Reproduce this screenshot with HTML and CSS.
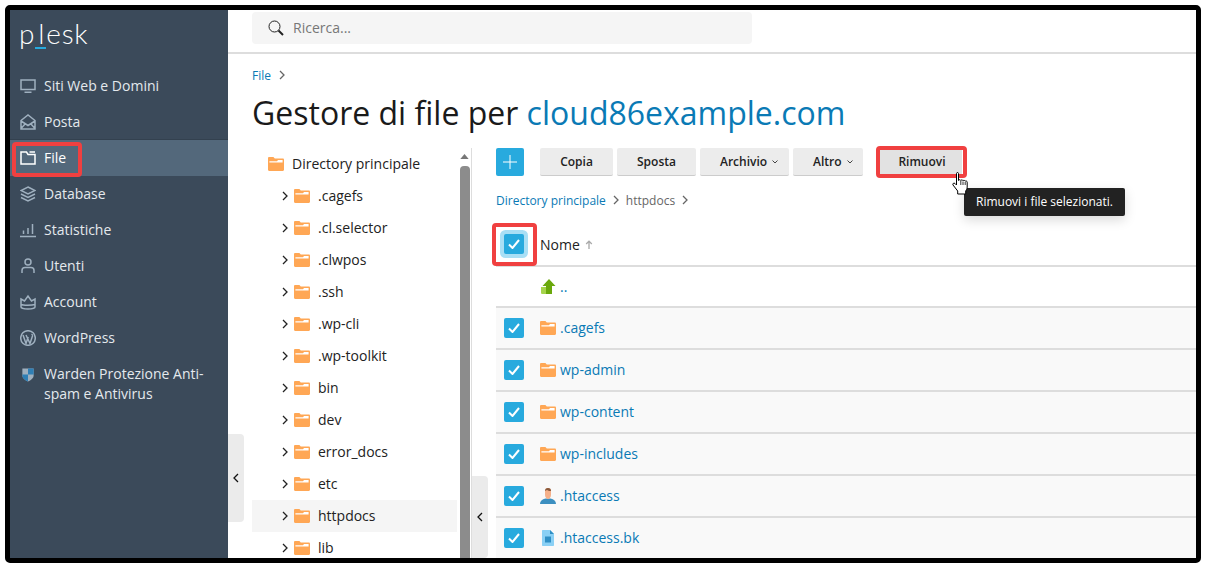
FILE: index.html
```html
<!DOCTYPE html>
<html lang="it">
<head>
    <meta charset="UTF-8">
    <title>Gestore di file</title>
    <link rel="stylesheet" href="styles.css">
</head>
<body>
    <svg class="defs" width="0" height="0">
        <symbol id="folder" viewBox="0 0 16 14">
            <path fill="#ffa755" d="M0 1.2C0 .5.5 0 1.2 0h4.2l1.4 1.6h8C15.500 1.600 16 2.100 16 2.800v10c0 .7-.5 1.200-1.200 1.200H1.200C.5 14 0 13.500 0 12.800z"/>
            <path fill="#fff" d="M1.400 4.200 9 4.200 10 3h4.600v2.600H1.400z"/>
        </symbol>
        <symbol id="chev" viewBox="0 0 8 10">
            <path fill="none" stroke="currentColor" stroke-width="1.300" d="M2 1l4 4-4 4"/>
        </symbol>
    </svg>
    <div class="frame">
        <aside class="sidebar">
            <div class="logo">p<span class="logo-l">l</span>esk</div>
            <nav class="nav">
                <a class="nav-item">
                    <svg class="nav-icon" viewBox="0 0 16 16"><path d="M1 2h14v9.500H1zM4.500 14.300h7"/></svg>
                    <span>Siti Web e Domini</span>
                </a>
                <a class="nav-item">
                    <svg class="nav-icon" viewBox="0 0 16 16"><path d="M1 6.500 8 1l7 5.500V15H1zM1 7l7 4.500L15 7M1 14.500l4.500-5M15 14.500l-4.500-5"/></svg>
                    <span>Posta</span>
                </a>
                <a class="nav-item active">
                    <svg class="nav-icon" viewBox="0 0 16 16"><path d="M1 2v12h14V4.500H8L6.500 2zM9.500 2H15"/></svg>
                    <span>File</span>
                </a>
                <a class="nav-item">
                    <svg class="nav-icon" viewBox="0 0 16 16"><path d="M8 1l7 3.500L8 8 1 4.500zM1 8l7 3.500L15 8M1 11.500 8 15l7-3.500"/></svg>
                    <span>Database</span>
                </a>
                <a class="nav-item">
                    <svg class="nav-icon" viewBox="0 0 16 16"><path d="M0 14.500h16M3.500 12V8.500M8 12V6M12.500 12V2"/></svg>
                    <span>Statistiche</span>
                </a>
                <a class="nav-item">
                    <svg class="nav-icon" viewBox="0 0 16 16"><circle cx="8" cy="4" r="3"/><path d="M2 15v-2.500C2 10.500 3 9.500 5 9.500h6c2 0 3 1 3 3V15"/></svg>
                    <span>Utenti</span>
                </a>
                <a class="nav-item">
                    <svg class="nav-icon" viewBox="0 0 16 16"><path d="M1 5l3.500 2L8 2l3.500 5L15 5v8c0 1-3 2-7 2s-7-1-7-2zM1 10.500c2 1 11 1 14 0"/></svg>
                    <span>Account</span>
                </a>
                <a class="nav-item">
                    <svg class="nav-icon" viewBox="0 0 16 16"><circle cx="8" cy="8" r="7.300"/><path d="M3 5l3 8.500 2.200-6.500M6 5l4 8.500L12.500 6c.3-1-.3-1.500-1-2"/></svg>
                    <span>WordPress</span>
                </a>
                <a class="nav-item tall">
                    <svg class="nav-shield" viewBox="0 0 14 16">
                        <path fill="#9fb0bf" d="M1 1.500h12V9c0 3-3 5-6 6.500C4 14 1 12 1 9z"/>
                        <path fill="#2f7fb5" d="M7 1.500h6V8H7zM1 8h6v7.500C4 14 1 12 1 9z"/>
                    </svg>
                    <span>Warden Protezione Anti-spam e Antivirus</span>
                </a>
            </nav>
        </aside>

        <div class="handle handle-nav"><svg class="handle-chev" viewBox="0 0 8 10"><path d="M6 1L2 5l4 4"/></svg></div>

        <main class="main">
            <header class="topbar">
                <div class="search">
                    <svg class="search-icon" viewBox="0 0 16 16"><circle cx="6.500" cy="6.500" r="5.500"/><path d="M10.500 10.500l4.500 4.500" stroke-width="2"/></svg>
                    <span>Ricerca...</span>
                </div>
            </header>

            <div class="content">
                <div class="crumbs"><a>File</a><svg class="crumb-chev"><use href="#chev"/></svg></div>
                <h1 class="title">Gestore di file per <a>cloud86example.com</a></h1>

                <div class="manager">
                    <section class="tree">
                        <div class="tree-list">
                            <div class="tree-root"><svg class="folder"><use href="#folder"/></svg>Directory principale</div>
                            <div class="tree-row"><svg class="tree-chev"><use href="#chev"/></svg><svg class="folder"><use href="#folder"/></svg>.cagefs</div>
                            <div class="tree-row"><svg class="tree-chev"><use href="#chev"/></svg><svg class="folder"><use href="#folder"/></svg>.cl.selector</div>
                            <div class="tree-row"><svg class="tree-chev"><use href="#chev"/></svg><svg class="folder"><use href="#folder"/></svg>.clwpos</div>
                            <div class="tree-row"><svg class="tree-chev"><use href="#chev"/></svg><svg class="folder"><use href="#folder"/></svg>.ssh</div>
                            <div class="tree-row"><svg class="tree-chev"><use href="#chev"/></svg><svg class="folder"><use href="#folder"/></svg>.wp-cli</div>
                            <div class="tree-row"><svg class="tree-chev"><use href="#chev"/></svg><svg class="folder"><use href="#folder"/></svg>.wp-toolkit</div>
                            <div class="tree-row"><svg class="tree-chev"><use href="#chev"/></svg><svg class="folder"><use href="#folder"/></svg>bin</div>
                            <div class="tree-row"><svg class="tree-chev"><use href="#chev"/></svg><svg class="folder"><use href="#folder"/></svg>dev</div>
                            <div class="tree-row"><svg class="tree-chev"><use href="#chev"/></svg><svg class="folder"><use href="#folder"/></svg>error_docs</div>
                            <div class="tree-row"><svg class="tree-chev"><use href="#chev"/></svg><svg class="folder"><use href="#folder"/></svg>etc</div>
                            <div class="tree-row current"><svg class="tree-chev"><use href="#chev"/></svg><svg class="folder"><use href="#folder"/></svg>httpdocs</div>
                            <div class="tree-row"><svg class="tree-chev"><use href="#chev"/></svg><svg class="folder"><use href="#folder"/></svg>lib</div>
                        </div>
                        <div class="scrollbar">
                            <svg class="scroll-up" viewBox="0 0 10 6"><path d="M5 0l5 6H0z"/></svg>
                            <div class="scroll-thumb"></div>
                        </div>
                    </section>

                    <div class="handle handle-tree"><svg class="handle-chev" viewBox="0 0 8 10"><path d="M6 1L2 5l4 4"/></svg></div>

                    <section class="files">
                        <div class="toolbar">
                            <button class="btn-add"><svg viewBox="0 0 14 14"><path d="M7 0v14M0 7h14"/></svg></button>
                            <button class="btn btn-copy">Copia</button>
                            <button class="btn btn-move">Sposta</button>
                            <button class="btn btn-archive">Archivio<svg class="caret" viewBox="0 0 6 4"><path d="M.5.5 3 3 5.500.5"/></svg></button>
                            <button class="btn btn-more">Altro<svg class="caret" viewBox="0 0 6 4"><path d="M.5.5 3 3 5.500.5"/></svg></button>
                            <button class="btn btn-remove">Rimuovi</button>
                        </div>
                        <div class="path"><a>Directory principale</a><svg class="crumb-chev"><use href="#chev"/></svg><span>httpdocs</span><svg class="crumb-chev"><use href="#chev"/></svg></div>

                        <div class="thead">
                            <span class="check focus"><svg viewBox="0 0 12 10"><path d="M1 5.500 4.500 9 11 1"/></svg></span>
                            <span class="thead-name">Nome</span>
                            <svg class="sort" viewBox="0 0 7 8"><path d="M3.500 8V1M1 3.500 3.500 1 6 3.500"/></svg>
                        </div>
                        <div class="row up">
                            <svg class="file-icon" viewBox="0 0 16 16">
                                <path fill="#6aa80c" d="M9 0l6.500 7H12v8H6V7H2.500z"/>
                                <path fill="#a6d44c" d="M1 8h5v7H2.500C1.500 15 1 14.500 1 13.500z"/>
                            </svg>
                            <a>..</a>
                        </div>
                        <div class="row selected">
                            <span class="check"><svg viewBox="0 0 12 10"><path d="M1 5.500 4.500 9 11 1"/></svg></span>
                            <svg class="file-icon"><use href="#folder"/></svg><a>.cagefs</a>
                        </div>
                        <div class="row selected">
                            <span class="check"><svg viewBox="0 0 12 10"><path d="M1 5.500 4.500 9 11 1"/></svg></span>
                            <svg class="file-icon"><use href="#folder"/></svg><a>wp-admin</a>
                        </div>
                        <div class="row selected">
                            <span class="check"><svg viewBox="0 0 12 10"><path d="M1 5.500 4.500 9 11 1"/></svg></span>
                            <svg class="file-icon"><use href="#folder"/></svg><a>wp-content</a>
                        </div>
                        <div class="row selected">
                            <span class="check"><svg viewBox="0 0 12 10"><path d="M1 5.500 4.500 9 11 1"/></svg></span>
                            <svg class="file-icon"><use href="#folder"/></svg><a>wp-includes</a>
                        </div>
                        <div class="row selected">
                            <span class="check"><svg viewBox="0 0 12 10"><path d="M1 5.500 4.500 9 11 1"/></svg></span>
                            <svg class="file-icon" viewBox="0 0 16 16">
                                <path fill="#3c8fc0" d="M0 16c0-3 2-4.500 5.500-5.500h5C14 11.500 16 13 16 16z"/>
                                <path fill="#f5b08a" d="M5 3c0-2 1-3 3-3s3 1 3 3v4c0 2-1.500 4-3 4S5 9 5 7z"/>
                                <path fill="#8a5a3c" d="M5 3c0-2 1-3 3-3s3 1 3 3H9L7 2 5 3z"/>
                            </svg>
                            <a>.htaccess</a>
                        </div>
                        <div class="row selected">
                            <span class="check"><svg viewBox="0 0 12 10"><path d="M1 5.500 4.500 9 11 1"/></svg></span>
                            <svg class="file-icon" viewBox="0 0 16 16">
                                <path fill="#8ad0f5" d="M3 0h7l4 4v11c0 .6-.4 1-1 1H3c-.6 0-1-.4-1-1V1c0-.6.4-1 1-1z"/>
                                <path fill="#2f8fc5" d="M10 0l4 4h-4zM5 6.500h6v6H5z"/>
                            </svg>
                            <a>.htaccess.bk</a>
                        </div>
                    </section>
                </div>
            </div>
        </main>

        <div class="mark mark-file"></div>
        <div class="mark mark-remove"></div>
        <div class="mark mark-check"></div>
        <div class="tooltip">Rimuovi i file selezionati.</div>
        <svg class="cursor" viewBox="0 0 17 23">
            <path fill="#fff" stroke="#000" d="M4.500 1.500c0-1.300 2-1.300 2 0v7c.5-1 2-1 2.300 0 .5-.8 1.900-.8 2.200.2.600-.6 2-.4 2.200.5.500-.5 2-.3 2 1V15c0 2-1 3-1.500 4v3h-8v-3L1 13c-.8-1.200.8-2.600 2-1.500l1.500 1.500z"/>
            <path fill="none" stroke="#000" stroke-width=".8" d="M8.800 9v4M11 9.500v3.500M13.200 10v3"/>
        </svg>
    </div>
</body>
</html>
```

FILE: styles.css
```css
* {
    box-sizing: border-box;
}

html, body {
    margin: 0;
    padding: 0;
    height: 568px;
    background: #fff;
    overflow: hidden;
}

body {
    font-family: "Open Sans", sans-serif;
    color: #222;
}

a {
    color: #0a7ab5;
}

.defs {
    position: absolute;
}

.frame {
    position: relative;
    display: flex;
    width: 1196px;
    height: 558px;
    margin: 5px;
    border: 5px solid #000;
    border-radius: 5px;
    overflow: hidden;
    background: #fff;
}

/* sidebar */
.sidebar {
    width: 218px;
    flex-shrink: 0;
    background: #3b4a5a;
    color: #e4e9ed;
}

.logo {
    height: 58px;
    padding: 2px 0 0 9px;
    font-family: "Lato", sans-serif;
    font-weight: 300;
    font-size: 28px;
    line-height: 42px;
    letter-spacing: 0.800px;
    color: #fff;
}

.logo-l {
    position: relative;
    padding: 0 1px 0 3px;
}

.logo-l::after {
    content: "";
    position: absolute;
    left: 0;
    bottom: 1px;
    width: 11px;
    height: 2px;
    background: #28aade;
}

.nav {
    display: flex;
    flex-direction: column;
}

.nav-item {
    display: flex;
    align-items: center;
    gap: 8px;
    height: 36px;
    padding-left: 10px;
    font-size: 14px;
    line-height: 20px;
    color: #e4e9ed;
}

.nav-item.active {
    background: #53687b;
    box-shadow: 0 -1px 0 #33414f;
    color: #fff;
}

.nav-item.active .nav-icon {
    stroke: #fff;
}

.nav-item.tall {
    align-items: flex-start;
    height: auto;
    padding-top: 8px;
}

.nav-icon {
    width: 16px;
    height: 16px;
    flex-shrink: 0;
    fill: none;
    stroke: #9fb0bf;
    stroke-width: 1.500;
}

.nav-shield {
    width: 14px;
    height: 15px;
    flex-shrink: 0;
    margin: 3px 1px 0;
}

/* collapse handles */
.handle {
    position: absolute;
    display: flex;
    align-items: center;
    justify-content: center;
    width: 16px;
    background: #ebebeb;
    border-radius: 0 4px 4px 0;
}

.handle-nav {
    left: 218px;
    top: 424px;
    height: 88px;
}

.handle-tree {
    left: 220px;
    top: 328px;
    height: 82px;
}

.handle-chev {
    width: 8px;
    height: 10px;
    fill: none;
    stroke: #111;
    stroke-width: 1.300;
}

/* main */
.main {
    flex: 1;
    min-width: 0;
}

.topbar {
    height: 44px;
    padding: 2px 0 0 24px;
    border-bottom: 2px solid #ddd;
}

.search {
    display: flex;
    align-items: center;
    gap: 9px;
    width: 500px;
    height: 32px;
    padding: 0 0 1px 16px;
    background: #f5f5f5;
    border-radius: 4px;
    font-size: 14px;
    color: #777;
}

.search-icon {
    width: 16px;
    height: 16px;
    fill: none;
    stroke: #222;
}

.content {
    padding: 0 0 0 24px;
}

.crumbs {
    display: flex;
    align-items: center;
    gap: 7px;
    height: 18px;
    margin-top: 12px;
    font-size: 12px;
    color: #0a7ab5;
}

.crumb-chev {
    width: 8px;
    height: 10px;
    color: #666;
}

.title {
    margin: 7px 0 0;
    height: 44px;
    font-size: 32px;
    line-height: 43px;
    font-weight: 400;
    color: #1a1a1a;
}

.manager {
    position: relative;
    display: flex;
    margin-top: 13px;
}

/* folder tree */
.tree {
    display: flex;
    width: 220px;
    height: 410px;
    flex-shrink: 0;
    border-right: 1px solid #ddd;
}

.tree-list {
    width: 205px;
    flex-shrink: 0;
    font-size: 14px;
    color: #222;
}

.tree-root,
.tree-row {
    display: flex;
    align-items: center;
    height: 32px;
    padding-bottom: 2px;
}

.tree-root {
    padding-left: 16px;
}

.tree-row {
    padding-left: 29px;
}

.tree-row.current {
    background: #f5f5f5;
}

.tree-chev {
    width: 8px;
    height: 10px;
    margin: 2px 5px 0 0;
    color: #222;
}

.folder {
    width: 16px;
    height: 14px;
    margin: 2px 8px 0 0;
}

.scrollbar {
    width: 14px;
    padding: 6px 0 0 3px;
}

.scroll-up {
    display: block;
    width: 9px;
    height: 5px;
    margin-bottom: 7px;
    fill: #777;
}

.scroll-thumb {
    width: 10px;
    height: 400px;
    background: #8c8c8c;
    border-radius: 4px 4px 0 0;
}

/* file list */
.files {
    flex: 1;
    min-width: 0;
    padding-left: 24px;
}

.toolbar {
    display: flex;
    height: 28px;
}

.btn-add {
    display: flex;
    align-items: center;
    justify-content: center;
    width: 28px;
    height: 28px;
    padding: 0;
    margin-right: 16px;
    border: 0;
    border-radius: 2px;
    background: #28aade;
}

.btn-add svg {
    width: 14px;
    height: 14px;
    fill: none;
    stroke: #fff;
}

.btn {
    display: flex;
    align-items: center;
    justify-content: center;
    gap: 5px;
    height: 28px;
    padding: 0;
    margin-right: 4px;
    border: 0;
    border-bottom: 1px solid #ccc;
    border-radius: 2px;
    background: #ececec;
    font-family: "Open Sans", sans-serif;
    font-size: 12px;
    font-weight: 600;
    color: #222;
}

.btn-copy {
    width: 73px;
}

.btn-move {
    width: 79px;
}

.btn-archive {
    width: 89px;
    justify-content: flex-start;
    padding-left: 20px;
}

.btn-more {
    width: 70px;
    margin-right: 17px;
    justify-content: flex-start;
    padding-left: 20px;
}

.btn-remove {
    width: 82px;
    padding-left: 2px;
    background: #e2e2e2;
}

.caret {
    width: 6px;
    height: 4px;
    fill: none;
    stroke: #444;
}

.path {
    display: flex;
    align-items: center;
    gap: 6px;
    height: 18px;
    margin-top: 15px;
    font-size: 12px;
    color: #666;
}

.thead {
    display: flex;
    align-items: center;
    height: 43px;
    margin-top: 15px;
    padding: 0 0 1px 8px;
    border-bottom: 2px solid #ddd;
    font-size: 14px;
}

.thead-name {
    margin-left: 16px;
}

.sort {
    width: 8px;
    height: 9px;
    margin-left: 5px;
    fill: none;
    stroke: #aaa;
    stroke-width: 1.200;
}

.row {
    display: flex;
    align-items: center;
    height: 42px;
    padding-left: 8px;
    border-bottom: 2px solid #ddd;
    font-size: 14px;
}

.row.selected {
    background: #f9f9f9;
}

.row.selected a {
    margin-bottom: 2px;
}

.row.up {
    height: 41px;
    padding-left: 44px;
    background: #fff;
}

.check {
    display: flex;
    align-items: center;
    justify-content: center;
    width: 20px;
    height: 20px;
    margin-right: 16px;
    border-radius: 2px;
    background: #28aade;
}

.check svg {
    width: 12px;
    height: 10px;
    fill: none;
    stroke: #fff;
    stroke-width: 2;
}

.check.focus {
    margin-right: 0;
    box-shadow: 0 0 0 4px #a9dff5;
}

.file-icon {
    width: 16px;
    height: 16px;
    margin-right: 4px;
    flex-shrink: 0;
}

/* annotations over the screenshot */
.mark {
    position: absolute;
    border: 4px solid #f04040;
    border-radius: 4px;
}

.mark-file {
    left: 2px;
    top: 132px;
    width: 70px;
    height: 35px;
}

.mark-remove {
    left: 866px;
    top: 136px;
    width: 91px;
    height: 32px;
}

.mark-check {
    left: 482px;
    top: 213px;
    width: 45px;
    height: 43px;
}

.tooltip {
    position: absolute;
    left: 954px;
    top: 178px;
    width: 161px;
    height: 28px;
    padding-left: 12px;
    background: #222;
    border-radius: 2px;
    box-shadow: 0 4px 12px rgba(0, 0, 0, 0.15);
    font-size: 12px;
    line-height: 27px;
    color: #fff;
}

.cursor {
    position: absolute;
    left: 942px;
    top: 162px;
    width: 17px;
    height: 23px;
}
```
